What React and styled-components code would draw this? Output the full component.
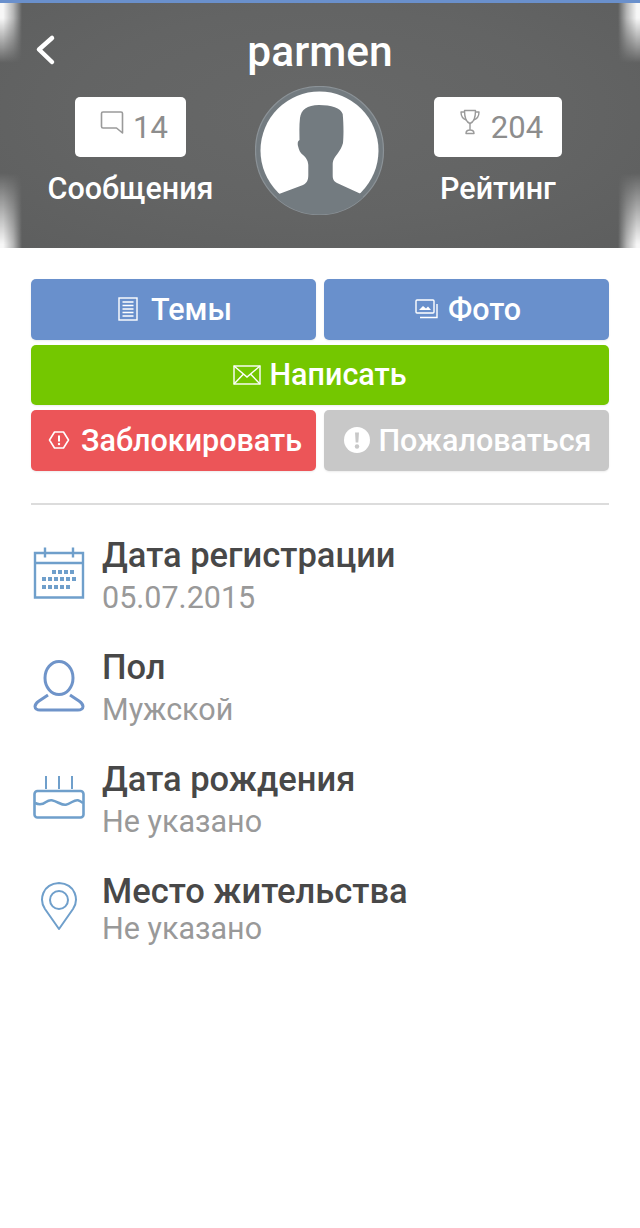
import React from 'react';
import styled, { createGlobalStyle } from 'styled-components';

const GlobalStyle = createGlobalStyle`
  html, body {
    margin: 0;
    padding: 0;
    background: #fff;
  }
  body {
    font-family: Roboto, "Liberation Sans", sans-serif;
  }
`;

const Page = styled.div`
  width: 640px;
  min-height: 1228px;
  background: #fff;
  border-top: 3px solid #6a90cc;
  box-sizing: border-box;
`;

const Header = styled.header`
  position: relative;
  height: 245px;
  overflow: hidden;
  background: radial-gradient(ellipse at 50% 45%, #676868 0%, #636464 55%, #5d5e5e 100%);
`;

const CornerGlow = styled.span`
  position: absolute;
  ${p => (p.$right ? 'right: 0;' : 'left: 0;')}
  ${p => (p.$bottom ? 'bottom: 0;' : 'top: 0;')}
  width: 22px;
  height: ${p => (p.$bottom ? 75 : 60)}px;
  background: linear-gradient(${p => (p.$right ? 'to left' : 'to right')}, rgba(255,255,255,.95) 15%, rgba(255,255,255,.55) 60%, rgba(255,255,255,0));
  -webkit-mask-image: linear-gradient(${p => (p.$bottom ? 'to top' : 'to bottom')}, #000 ${p => (p.$bottom ? 5 : 25)}%, transparent);
  mask-image: linear-gradient(${p => (p.$bottom ? 'to top' : 'to bottom')}, #000 ${p => (p.$bottom ? 5 : 25)}%, transparent);
`;

const BackIcon = styled.svg`
  position: absolute;
  top: 30px;
  left: 34px;
  width: 24px;
  height: 34px;
`;

const Title = styled.h1`
  margin: 0;
  padding-top: 25px;
  color: #fff;
  font-size: 42.5px;
  font-weight: 500;
  line-height: 48px;
  text-align: center;
`;

const StatsRow = styled.div`
  display: flex;
  align-items: flex-start;
  margin-top: 10px;
  padding-left: 48px;
`;

const Stat = styled.div`
  display: flex;
  flex-direction: column;
  align-items: center;
  width: ${p => p.$width}px;
  padding-top: 11px;
`;

const StatBox = styled.div`
  display: flex;
  align-items: center;
  justify-content: center;
  gap: ${p => p.$gap}px;
  box-sizing: border-box;
  width: ${p => p.$width}px;
  height: 60px;
  padding-left: 7px;
  background: #fff;
  border-radius: 5px;
  color: #8d8d8d;
  font-size: 31px;
`;

const StatLabel = styled.div`
  margin-top: 14px;
  color: #fff;
  font-size: 30.5px;
  font-weight: 500;
  line-height: 36px;
  white-space: nowrap;
`;

const Avatar = styled.svg`
  flex: none;
  width: 130px;
  height: 130px;
  margin: 0 49px 0 42px;
`;

const Content = styled.main`
  padding: 31px 31px 0;
`;

const Buttons = styled.div`
  display: grid;
  grid-template-columns: 1fr 1fr;
  gap: 5px 8px;
`;

const ActionButton = styled.button`
  display: flex;
  align-items: center;
  justify-content: center;
  gap: ${p => p.$gap}px;
  grid-column: ${p => (p.$wide ? '1 / -1' : 'auto')};
  height: 60.5px;
  padding: 0 0 0 ${p => (p.$wide ? 0 : 3)}px;
  border: 0;
  border-radius: 5px;
  background: ${p => p.$bg};
  box-shadow: 0 1px 2px rgba(0, 0, 0, .08);
  color: #fff;
  font-family: inherit;
  font-size: 30.5px;
  font-weight: 500;
  white-space: nowrap;
`;

const Divider = styled.hr`
  height: 2px;
  margin: 32px 0 0;
  border: 0;
  background: #dcdcdc;
`;

const InfoList = styled.div`
  display: flex;
  flex-direction: column;
  padding-top: 31px;
`;

const InfoRow = styled.div`
  display: flex;
  align-items: flex-start;
  height: 112px;
`;

const IconSlot = styled.div`
  display: flex;
  justify-content: center;
  flex: none;
  width: 56px;
  margin-right: 15px;
  padding-top: ${p => p.$top}px;
`;

const InfoTitle = styled.div`
  color: #484848;
  font-size: 34.5px;
  font-weight: 500;
  line-height: 38px;
  white-space: nowrap;
`;

const InfoValue = styled.div`
  margin-top: ${p => (p.$tight ? 0 : 5)}px;
  color: #999;
  font-size: 30.5px;
  line-height: 38px;
`;

const ICON_BLUE = '#6f9fcb';

// squares of the calendar grid, x values per row
const CALENDAR_DOTS = [
  [25, [19, 25, 31, 37]],
  [32, [9, 15, 21, 27, 33, 39]],
  [40, [9, 15, 21, 27, 33]],
];

function App() {
  return (
    <>
      <GlobalStyle />
      <Page>
        <Header>
          <CornerGlow />
          <CornerGlow $bottom />
          <CornerGlow $right />
          <CornerGlow $right $bottom />
          <BackIcon viewBox="0 0 24 34" fill="none" stroke="#fff" strokeWidth="4.5" strokeLinecap="round" strokeLinejoin="round">
            <path d="M18 5 5 16.5 18 29" />
          </BackIcon>
          <Title>parmen</Title>
          <StatsRow>
            <Stat $width={165}>
              <StatBox $width={111} $gap={9}>
                <svg width="24" height="24" viewBox="0 0 24 24" fill="none" stroke="#9a9a9a" strokeWidth="1.6" strokeLinejoin="round" style={{ marginTop: -10 }}>
                  <path d="M3 2h18a1.5 1.5 0 0 1 1.5 1.5V23l-6-5H3a1.5 1.5 0 0 1-1.5-1.5v-13A1.5 1.5 0 0 1 3 2z" />
                </svg>
                14
              </StatBox>
              <StatLabel>Сообщения</StatLabel>
            </Stat>
            <Avatar viewBox="0 0 130 130">
              <defs>
                <clipPath id="avatar-clip">
                  <circle cx="64.5" cy="64.5" r="64" />
                </clipPath>
              </defs>
              <circle cx="64.5" cy="64.5" r="64" fill="#737b80" stroke="#8b9297" strokeWidth="1.2" />
              <circle cx="64.5" cy="64.5" r="59" fill="#fff" />
              <path
                clipPath="url(#avatar-clip)"
                fill="#737b80"
                d="M64 19C52 19 46 24 45 32C44 40 44.5 48 44.5 54C42.5 55 42.5 58 43 60C44 64 45 67 48 69C50.5 71 53 74 53.3 79V89C53.3 94 52 97 48 99L24 108L10 130H120L106 108L82 97C78.5 95 77.7 93 77.7 89V78C78 73 80 71 83 67C85 64 87 61 88 57C88.7 50 88.7 38 87.7 28C86 22 76 19 64 19z"
              />
            </Avatar>
            <Stat $width={128}>
              <StatBox $width={128} $gap={11}>
                <svg width="20" height="26" viewBox="0 0 20 26" fill="none" stroke="#9a9a9a" strokeWidth="1.4" strokeLinejoin="round" style={{ marginTop: -10 }}>
                  <path d="M4.5 1.5h11c0 7-1 11.5-5.5 13-4.5-1.5-5.500-6-5.500-13z" />
                  <path d="M4.5 3H1c0 4.500 2 7 5.500 8M15.500 3H19c0 4.500-2 7-5.500 8" />
                  <path d="M10 14.5V21M6 24.500c0-2.500 1.500-3.500 4-3.500s4 1 4 3.500z" />
                </svg>
                204
              </StatBox>
              <StatLabel>Рейтинг</StatLabel>
            </Stat>
          </StatsRow>
        </Header>
        <Content>
          <Buttons>
            <ActionButton type="button" $bg="#6990cc" $gap={13}>
              <svg width="20" height="24" viewBox="0 0 20 24" fill="none" stroke="#fff" strokeWidth="1.4">
                <rect x="1" y="1" width="18" height="22" />
                <path d="M4.5 5h11M4.5 8.500h11M4.500 12h11M4.500 15.500h11M4.500 19h11" />
              </svg>
              Темы
            </ActionButton>
            <ActionButton type="button" $bg="#6990cc" $gap={10}>
              <svg width="23" height="20" viewBox="0 0 23 20" fill="none" stroke="#fff" strokeWidth="1.4">
                <rect x="1" y="1" width="18" height="13" rx="1" />
                <path d="M22 5v13.500H5" />
                <path d="M4 11l4-4 3 2.500 2-2 3 3.500z" fill="#fff" stroke="none" />
              </svg>
              Фото
            </ActionButton>
            <ActionButton type="button" $bg="#74c700" $wide $gap={8}>
              <svg width="28" height="20" viewBox="0 0 28 20" fill="none" stroke="#fff" strokeWidth="1.4">
                <rect x="1" y="1" width="26" height="18" />
                <path d="M1 1l13 11L27 1M1 19l9.500-10M27 19l-9.500-10" />
              </svg>
              Написать
            </ActionButton>
            <ActionButton type="button" $bg="#ec5558" $gap={11}>
              <svg width="22" height="20" viewBox="0 0 22 20" fill="none">
                <path d="M6.500 2h9l5 8-5 8h-9l-5-8z" stroke="#fff" strokeWidth="1.6" strokeLinejoin="round" />
                <path d="M11 5.500v6" stroke="#fff" strokeWidth="2" />
                <circle cx="11" cy="14" r="1.2" fill="#fff" />
              </svg>
              Заблокировать
            </ActionButton>
            <ActionButton type="button" $bg="#c8c8c8" $gap={8}>
              <svg width="26" height="26" viewBox="0 0 26 26">
                <circle cx="13" cy="13" r="13" fill="#fff" />
                <path d="M11 5.500h4l-.7 10h-2.600z" fill="#c8c8c8" />
                <circle cx="13" cy="19.500" r="2.200" fill="#c8c8c8" />
              </svg>
              Пожаловаться
            </ActionButton>
          </Buttons>
          <Divider />
          <InfoList>
            <InfoRow>
              <IconSlot $top={11}>
                <svg width="52" height="52" viewBox="0 0 52 52" fill="none" stroke={ICON_BLUE} strokeWidth="2.4">
                  <path d="M2 6h48v44.500H2zM2 16h48M12 .5v10M40 .5v10" />
                  {CALENDAR_DOTS.map(([y, xs]) => xs.map(x => (
                    <rect key={`${x}-${y}`} x={x} y={y - 2} width="4" height="4" fill={ICON_BLUE} stroke="none" />
                  )))}
                </svg>
              </IconSlot>
              <div>
                <InfoTitle>Дата регистрации</InfoTitle>
                <InfoValue>05.07.2015</InfoValue>
              </div>
            </InfoRow>
            <InfoRow>
              <IconSlot $top={12}>
                <svg width="52" height="52" viewBox="0 0 52 52" fill="none" stroke="#6f94c9" strokeWidth="3">
                  <ellipse cx="26" cy="18" rx="14" ry="16.5" />
                  <path d="M15 35 6 41c-3 2-4 3.500-4 5.500S4 50 7 50h38c3 0 5-1.500 5-3.500s-1-3.500-4-5.500l-9-6" strokeLinejoin="round" />
                </svg>
              </IconSlot>
              <div>
                <InfoTitle>Пол</InfoTitle>
                <InfoValue>Мужской</InfoValue>
              </div>
            </InfoRow>
            <InfoRow>
              <IconSlot $top={15}>
                <svg width="52" height="44" viewBox="0 0 52 44" fill="none" stroke={ICON_BLUE} strokeWidth="2.6">
                  <rect x="1.5" y="16" width="49" height="26.5" rx="3" />
                  <path d="M2 28c4 2 7 2 11-1s7-2 13 1 8 2 13-1 7-2 11 1" />
                  <path d="M13 1v13M26 1v13M39 1v13" strokeWidth="2" />
                </svg>
              </IconSlot>
              <div>
                <InfoTitle>Дата рождения</InfoTitle>
                <InfoValue>Не указано</InfoValue>
              </div>
            </InfoRow>
            <InfoRow>
              <IconSlot $top={10}>
                <svg width="38" height="48" viewBox="0 0 38 48" fill="none" stroke={ICON_BLUE} strokeWidth="2">
                  <path d="M19 47 5 27C-1 18 2 2 19 1c17 1 20 17 14 26z" strokeLinejoin="round" />
                  <circle cx="19" cy="18" r="9" />
                </svg>
              </IconSlot>
              <div>
                <InfoTitle>Место жительства</InfoTitle>
                <InfoValue $tight>Не указано</InfoValue>
              </div>
            </InfoRow>
          </InfoList>
        </Content>
      </Page>
    </>
  );
}

export default App;
